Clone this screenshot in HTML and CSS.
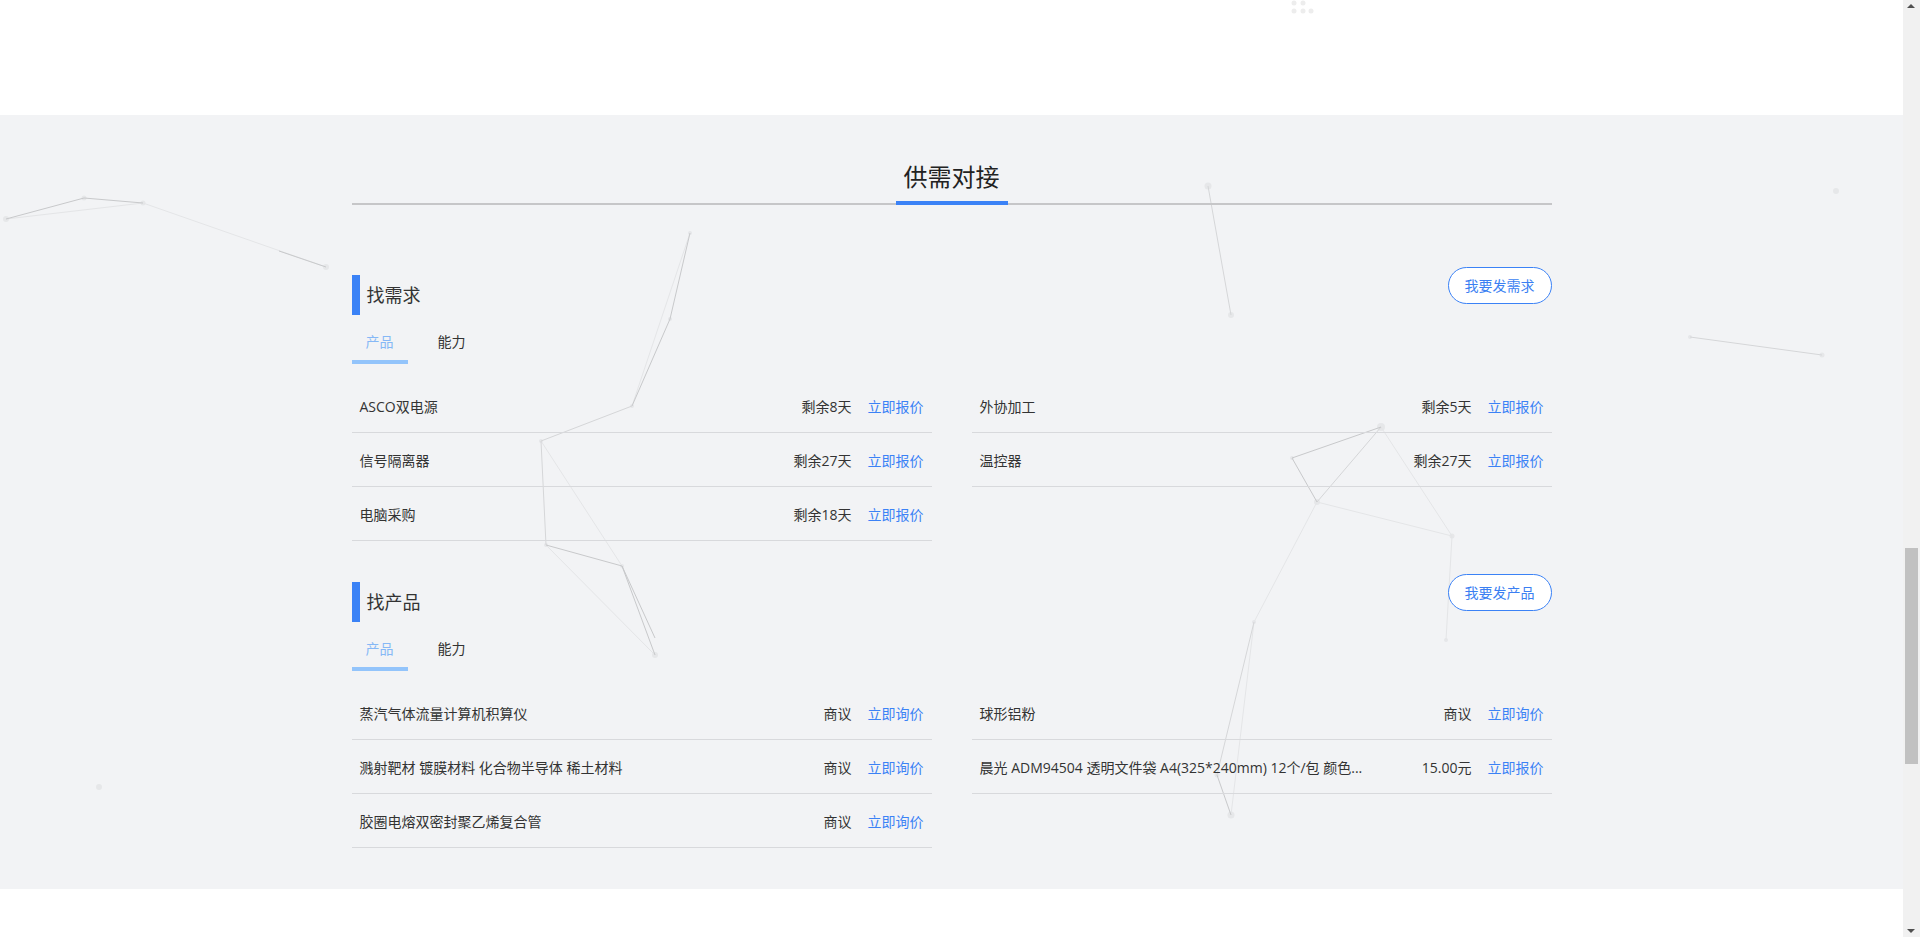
FILE: index.html
```html
<!DOCTYPE html>
<html lang="zh-CN">
<head>
<meta charset="utf-8">
<title>供需对接</title>
<link rel="stylesheet" href="styles.css">
</head>
<body>
<div class="page">
  <div class="top-area">
    <svg class="loader-dots" width="26" height="16" viewBox="0 0 26 16">
      <circle cx="3" cy="3" r="2.5"/>
      <circle cx="12" cy="3" r="2.5"/>
      <circle cx="3" cy="11" r="2.5"/>
      <circle cx="12" cy="11" r="2.5"/>
      <circle cx="20" cy="11" r="2.5"/>
    </svg>
  </div>

  <section class="supply">
    <svg class="net" width="1903" height="774" viewBox="0 115 1903 774">
      <g class="dots">
        <circle cx="6" cy="219" r="3"/><circle cx="84" cy="198" r="2.5"/><circle cx="143" cy="203" r="2.5"/><circle cx="326" cy="267" r="3"/>
        <circle cx="690" cy="233" r="2"/><circle cx="670" cy="319" r="2"/><circle cx="632" cy="406" r="2"/><circle cx="541" cy="441" r="2"/><circle cx="546" cy="545" r="2"/><circle cx="622" cy="566" r="2"/><circle cx="655" cy="655" r="3"/>
        <circle cx="1208" cy="186" r="3.5"/><circle cx="1231" cy="315" r="3"/>
        <circle cx="1381" cy="427" r="4"/><circle cx="1292" cy="458" r="2"/><circle cx="1317" cy="502" r="3"/><circle cx="1452" cy="536" r="2.5"/><circle cx="1446" cy="640" r="2"/>
        <circle cx="1254" cy="622" r="2"/><circle cx="1217" cy="775" r="2.5"/><circle cx="1231" cy="815" r="3.5"/>
        <circle cx="1690" cy="337" r="2"/><circle cx="1822" cy="355" r="2.5"/><circle cx="1836" cy="191" r="3"/><circle cx="99" cy="787" r="3"/>
      </g>
      <g class="ln-f">
        <line x1="6" y1="219" x2="143" y2="203"/>
        <line x1="143" y1="203" x2="326" y2="267"/>
        <line x1="690" y1="233" x2="632" y2="406"/>
        <line x1="541" y1="441" x2="622" y2="566"/>
        <line x1="546" y1="545" x2="655" y2="655"/>
        <line x1="1381" y1="427" x2="1452" y2="536"/>
        <line x1="1317" y1="502" x2="1452" y2="536"/>
        <line x1="1452" y1="536" x2="1446" y2="640"/>
        <line x1="1317" y1="502" x2="1254" y2="622"/>
        <line x1="1254" y1="622" x2="1231" y2="815"/>
      </g>
      <g class="ln-m">
        <line x1="1208" y1="186" x2="1231" y2="315"/>
        <line x1="1317" y1="502" x2="1381" y2="427"/>
        <line x1="632" y1="406" x2="541" y2="441"/>
        <line x1="541" y1="441" x2="546" y2="545"/>
        <line x1="1254" y1="622" x2="1217" y2="775"/>
        <line x1="1690" y1="337" x2="1822" y2="355"/>
      </g>
      <g class="ln-d">
        <line x1="6" y1="219" x2="84" y2="198"/>
        <line x1="84" y1="198" x2="143" y2="203"/>
        <line x1="279" y1="251" x2="326" y2="267"/>
        <line x1="690" y1="233" x2="670" y2="319"/>
        <line x1="670" y1="319" x2="632" y2="406"/>
        <line x1="546" y1="545" x2="622" y2="566"/>
        <line x1="622" y1="566" x2="655" y2="655"/>
        <line x1="622" y1="566" x2="655" y2="638"/>
        <line x1="1381" y1="427" x2="1292" y2="458"/>
        <line x1="1292" y1="458" x2="1317" y2="502"/>
        <line x1="1217" y1="775" x2="1231" y2="815"/>
      </g>
    </svg>

    <div class="container">
      <div class="title-wrap"><h2 class="title">供需对接</h2></div>

      <div class="block">
        <div class="block-head">
          <h3 class="block-title">找需求</h3>
          <a class="pub-btn" href="#">我要发需求</a>
        </div>
        <div class="tabs">
          <span class="tab active">产品</span>
          <span class="tab">能力</span>
        </div>
        <div class="list">
          <div class="row"><span class="name">ASCO双电源</span><span class="meta">剩余8天</span><a class="act" href="#">立即报价</a></div>
          <div class="row"><span class="name">外协加工</span><span class="meta">剩余5天</span><a class="act" href="#">立即报价</a></div>
          <div class="row"><span class="name">信号隔离器</span><span class="meta">剩余27天</span><a class="act" href="#">立即报价</a></div>
          <div class="row"><span class="name">温控器</span><span class="meta">剩余27天</span><a class="act" href="#">立即报价</a></div>
          <div class="row"><span class="name">电脑采购</span><span class="meta">剩余18天</span><a class="act" href="#">立即报价</a></div>
        </div>
      </div>

      <div class="block block-second">
        <div class="block-head">
          <h3 class="block-title">找产品</h3>
          <a class="pub-btn" href="#">我要发产品</a>
        </div>
        <div class="tabs">
          <span class="tab active">产品</span>
          <span class="tab">能力</span>
        </div>
        <div class="list">
          <div class="row"><span class="name">蒸汽气体流量计算机积算仪</span><span class="meta">商议</span><a class="act" href="#">立即询价</a></div>
          <div class="row"><span class="name">球形铝粉</span><span class="meta">商议</span><a class="act" href="#">立即询价</a></div>
          <div class="row"><span class="name">溅射靶材 镀膜材料 化合物半导体 稀土材料</span><span class="meta">商议</span><a class="act" href="#">立即询价</a></div>
          <div class="row"><span class="name">晨光 ADM94504 透明文件袋 A4(325*240mm) 12个/包 颜色...</span><span class="meta">15.00元</span><a class="act" href="#">立即报价</a></div>
          <div class="row"><span class="name">胶圈电熔双密封聚乙烯复合管</span><span class="meta">商议</span><a class="act" href="#">立即询价</a></div>
        </div>
      </div>
    </div>
  </section>

  <div class="bottom-area"></div>
</div>

<div class="scrollbar">
  <span class="sb-up"></span>
  <span class="sb-thumb"></span>
  <span class="sb-down"></span>
</div>
</body>
</html>
```

FILE: styles.css
```css
html, body {
  margin: 0;
  padding: 0;
  overflow: hidden;
  background: #fff;
}

body {
  font-family: "Open Sans", "Noto Sans CJK SC", sans-serif;
  font-size: 14px;
  color: #333;
}

.page {
  width: calc(100% - 17px);
}

.top-area {
  height: 115px;
  position: relative;
  background: #fff;
}

.loader-dots {
  position: absolute;
  left: 1291px;
  top: 0;
  fill: #ededed;
}

.supply {
  position: relative;
  background: #f2f3f5;
  padding: 45px 0 41px;
  overflow: hidden;
}

.net {
  position: absolute;
  left: 0;
  top: 0;
}

.net .dots { fill: #e6e7e9; }
.net .ln-f line { stroke: #e4e5e7; stroke-width: 1; }
.net .ln-m line { stroke: #d5d6d8; stroke-width: 1; }
.net .ln-d line { stroke: #c8c9cb; stroke-width: 1; }

.container {
  position: relative;
  width: 1200px;
  margin: 0 auto;
}

.title-wrap {
  text-align: center;
  border-bottom: 2px solid #c6c6c8;
}

.title {
  display: inline-block;
  margin: 0 0 -2px;
  padding: 0 8px 7px;
  font-size: 24px;
  line-height: 34px;
  font-weight: 400;
  color: #222;
  border-bottom: 4px solid #3b82f6;
}

.block {
  margin-top: 62px;
}

.block-second {
  margin-top: 33px;
}

.block-head {
  display: flex;
  justify-content: space-between;
  align-items: flex-start;
}

.block-title {
  margin: 8px 0 0;
  height: 40px;
  line-height: 40px;
  border-left: 8px solid #3b82f6;
  padding-left: 7px;
  font-size: 18px;
  font-weight: 400;
  color: #333;
}

.pub-btn {
  display: block;
  height: 37px;
  box-sizing: border-box;
  line-height: 35px;
  padding: 0 16px;
  border: 1px solid #3b82f6;
  border-radius: 19px;
  background: #fff;
  color: #3b7ff2;
  font-size: 14px;
  text-decoration: none;
}

.tabs {
  display: flex;
  margin-top: 12px;
}

.tab {
  padding: 4px 14px 7px;
  line-height: 22px;
  font-size: 14px;
  color: #333;
  border-bottom: 4px solid transparent;
  margin-right: 16px;
}

.tab.active {
  color: #86b8f6;
  border-bottom-color: #93c4fb;
}

.list {
  margin-top: 15px;
  display: grid;
  grid-template-columns: 580px 580px;
  column-gap: 40px;
}

.row {
  display: flex;
  align-items: center;
  height: 54px;
  box-sizing: border-box;
  padding: 0 8px;
  border-bottom: 1px solid #d8d9dc;
}

.name {
  margin-right: auto;
  white-space: nowrap;
  color: #333;
}

.meta {
  margin-left: 20px;
  color: #333;
  white-space: nowrap;
}

.act {
  margin-left: 16px;
  color: #3b82f6;
  text-decoration: none;
  white-space: nowrap;
}

.bottom-area {
  height: 48px;
  background: #fff;
}

.scrollbar {
  position: fixed;
  right: 0;
  top: 0;
  width: 17px;
  height: 100%;
  background: #f1f1f1;
}

.sb-up, .sb-down {
  position: absolute;
  left: 4px;
  width: 0;
  height: 0;
  border-left: 4.5px solid transparent;
  border-right: 4.5px solid transparent;
}

.sb-up {
  top: 4px;
  border-bottom: 4px solid #505050;
}

.sb-down {
  bottom: 4px;
  border-top: 4px solid #505050;
}

.sb-thumb {
  position: absolute;
  left: 2px;
  top: 548px;
  width: 13px;
  height: 216px;
  background: #c1c1c1;
}
```
